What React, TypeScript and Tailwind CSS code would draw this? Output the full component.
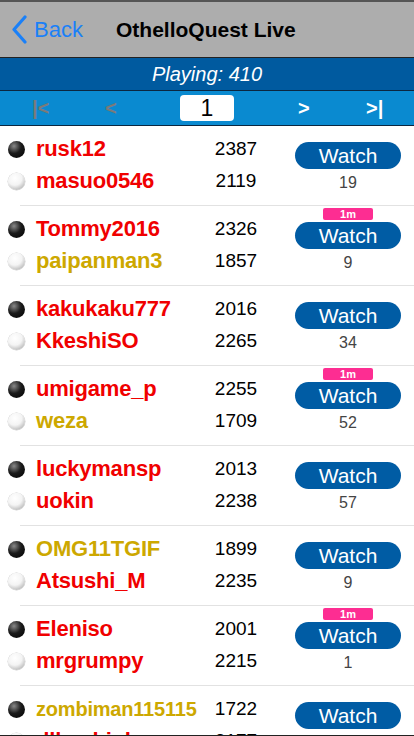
import React from "react";

type Player = { name: string; rating: number; gold?: boolean; small?: boolean };
type Game = { black: Player; white: Player; viewers: number; fresh?: boolean };

const games: Game[] = [
	{ black: { name: "rusk12", rating: 2387 }, white: { name: "masuo0546", rating: 2119 }, viewers: 19 },
	{ black: { name: "Tommy2016", rating: 2326 }, white: { name: "paipanman3", rating: 1857, gold: true }, viewers: 9, fresh: true },
	{ black: { name: "kakukaku777", rating: 2016 }, white: { name: "KkeshiSO", rating: 2265 }, viewers: 34 },
	{ black: { name: "umigame_p", rating: 2255 }, white: { name: "weza", rating: 1709, gold: true }, viewers: 52, fresh: true },
	{ black: { name: "luckymansp", rating: 2013 }, white: { name: "uokin", rating: 2238 }, viewers: 57 },
	{ black: { name: "OMG11TGIF", rating: 1899, gold: true }, white: { name: "Atsushi_M", rating: 2235 }, viewers: 9 },
	{ black: { name: "Eleniso", rating: 2001 }, white: { name: "mrgrumpy", rating: 2215 }, viewers: 1, fresh: true },
	{ black: { name: "zombiman115115", rating: 1722, gold: true, small: true }, white: { name: "dlkoabiub", rating: 2177 }, viewers: 4 },
];

const font = { fontFamily: '"Liberation Sans", Arial, sans-serif' };

const Stone = ({ black }: { black: boolean }) => (
	<div
		className={
			black
				? "h-[17px] w-[17px] shrink-0 rounded-full bg-[radial-gradient(circle_at_35%_30%,#8a8a8a_0%,#1a1a1a_45%,#000_100%)]"
				: "h-[17px] w-[17px] shrink-0 rounded-full bg-[radial-gradient(circle_at_40%_30%,#ffffff_0%,#f4f4f4_45%,#9a9a9a_100%)] shadow-[0_0_0_0.5px_#cfcfcf]"
		}
	/>
);

const PlayerLine = ({ player, black }: { player: Player; black: boolean }) => (
	<div className="flex h-8 items-center">
		<div className="flex w-9 shrink-0 items-center pl-[8px]">
			<Stone black={black} />
		</div>
		<div
			className={`w-[160px] shrink-0 overflow-visible whitespace-nowrap font-bold leading-8 tracking-[-0.2px] ${player.small ? "text-[20px]" : "text-[22px]"} ${player.gold ? "text-[#cda800]" : "text-[#f00000]"}`}
		>
			{player.name}
		</div>
		<div className="w-[80px] text-center text-[19px] leading-8 text-black">{player.rating}</div>
	</div>
);

const GameRow = ({ game }: { game: Game }) => (
	<div className="relative flex h-20 shrink-0">
		<div className="flex flex-col pt-[7px]">
			<PlayerLine player={game.black} black />
			<PlayerLine player={game.white} black={false} />
		</div>
		<div className="ml-[19px] flex w-[106px] flex-col items-center">
			<div className="flex h-[16px] items-start pt-[2px]">
				{game.fresh && (
					<div className="flex h-3 w-[50px] items-center justify-center rounded-[2px] bg-[#fd2d92] text-[11px] font-bold leading-none text-white">
						1m
					</div>
				)}
			</div>
			<div className="flex h-[27px] w-[106px] items-center justify-center rounded-full bg-[#005ca4] text-[21px] leading-none text-white">
				Watch
			</div>
			<div className="mt-[4px] text-[16px] leading-5 text-[#444]">{game.viewers}</div>
		</div>
		<div className="absolute bottom-0 left-5 right-0 h-px bg-[#e2e2e2]" />
	</div>
);

export default function App() {
	return (
		<div className="relative flex h-[736px] w-[414px] flex-col overflow-hidden bg-white" style={font}>
			<div className="flex h-[58px] shrink-0 items-center border-t-2 border-b border-t-[#555] border-b-[#222] bg-[#adadad]">
				<div className="flex w-[110px] items-center pl-[11px] text-[#1a80f8]">
					<svg width="17" height="29" viewBox="0 0 17 29" fill="none">
						<path d="M14 2 L3 14.5 L14 27" stroke="currentColor" strokeWidth="3.2" strokeLinecap="round" strokeLinejoin="round" />
					</svg>
					<span className="ml-[6px] text-[22px] leading-none">Back</span>
				</div>
				<div className="ml-[6px] text-[21px] font-bold leading-none text-black">OthelloQuest Live</div>
			</div>
			<div className="flex h-[33px] shrink-0 items-center justify-center border-b border-[#0b2740] bg-[#005a9f] text-[20px] italic leading-none text-white">
				Playing: 410
			</div>
			<div className="flex h-[35px] shrink-0 items-center border-b border-[#0b2740] bg-[#0a8ad0] font-bold">
				<div className="w-[81px] pl-[32px] text-[20px] leading-none text-[#7a7a7a]">|&lt;</div>
				<div className="w-[99px] pl-[24px] text-[20px] leading-none text-[#7a7a7a]">&lt;</div>
				<div className="flex h-[26px] w-[54px] items-center justify-center rounded-[4px] bg-white text-[23px] font-normal leading-none text-black">
					1
				</div>
				<div className="w-[132px] pl-[64px] text-[20px] leading-none text-white">&gt;</div>
				<div className="text-[20px] leading-none text-white">&gt;|</div>
			</div>
			<div className="flex flex-col">
				{games.map((game) => (
					<GameRow key={game.black.name} game={game} />
				))}
			</div>
			<div className="absolute bottom-0 left-0 right-0 h-px bg-[#222]" />
		</div>
	);
}
